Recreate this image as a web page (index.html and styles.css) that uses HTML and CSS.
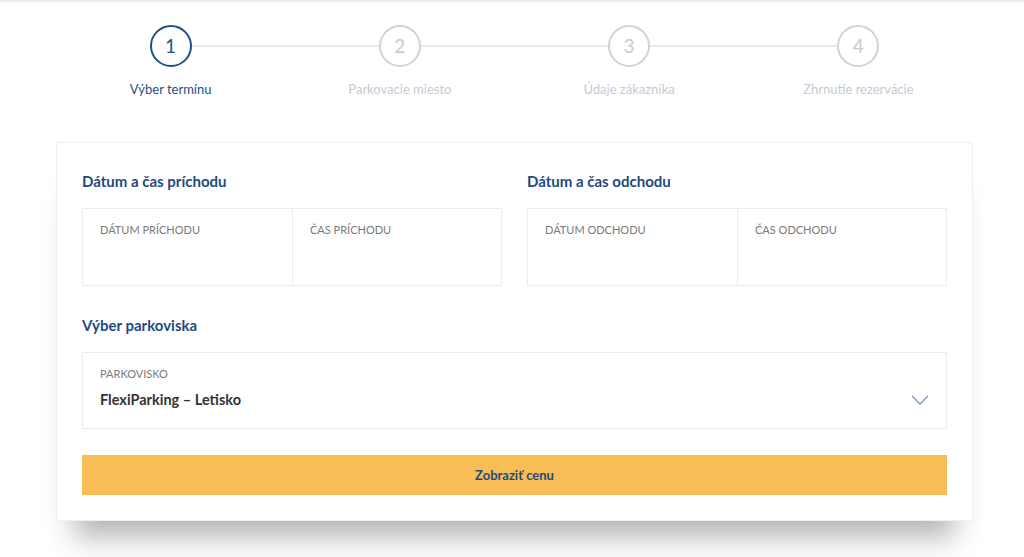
FILE: index.html
```html
<!DOCTYPE html>
<html lang="sk">
<head>
    <meta charset="UTF-8">
    <meta name="viewport" content="width=device-width, initial-scale=1.0">
    <title>Rezervácia parkovania</title>
    <link rel="stylesheet" href="styles.css">
</head>
<body>

<div class="page">
    <!-- Kroky rezervácie -->
    <ol class="steps">
        <li class="step active">
            <span class="step-num">1</span>
            <span class="step-label">Výber termínu</span>
        </li>
        <li class="step">
            <span class="step-num">2</span>
            <span class="step-label">Parkovacie miesto</span>
        </li>
        <li class="step">
            <span class="step-num">3</span>
            <span class="step-label">Údaje zákazníka</span>
        </li>
        <li class="step">
            <span class="step-num">4</span>
            <span class="step-label">Zhrnutie rezervácie</span>
        </li>
    </ol>

    <form class="card">
        <div class="row">
            <div class="group">
                <h2>Dátum a čas príchodu</h2>
                <div class="field-pair">
                    <div class="field">
                        <label>Dátum príchodu</label>
                    </div>
                    <div class="field">
                        <label>Čas príchodu</label>
                    </div>
                </div>
            </div>
            <div class="group">
                <h2>Dátum a čas odchodu</h2>
                <div class="field-pair">
                    <div class="field">
                        <label>Dátum odchodu</label>
                    </div>
                    <div class="field">
                        <label>Čas odchodu</label>
                    </div>
                </div>
            </div>
        </div>

        <h2 class="section-title">Výber parkoviska</h2>
        <div class="select">
            <div>
                <label>Parkovisko</label>
                <div class="select-value">FlexiParking – Letisko</div>
            </div>
            <svg class="chevron" width="18" height="10" viewBox="0 0 18 10">
                <polyline points="1,1 9,9 17,1" fill="none" stroke="#7d97b8" stroke-width="1.3"/>
            </svg>
        </div>

        <button type="button" class="btn">Zobraziť cenu</button>
    </form>
</div>

</body>
</html>
```

FILE: styles.css
```css
body {
    margin: 0;
    font-family: Lato, "Open Sans", Arial, sans-serif;
    background: #fff;
    border-top: 2px solid #ebebeb;
    color: #333;
}
.page {
    width: 917px;
    margin: 0 50px 0 56px;
    padding-bottom: 40px;
}
.steps {
    list-style: none;
    margin: 0;
    padding: 23px 0 0;
    display: grid;
    grid-template-columns: repeat(4, 1fr);
}
.step {
    position: relative;
    display: flex;
    flex-direction: column;
    align-items: center;
}
.step:not(:last-child)::before {
    content: "";
    position: absolute;
    top: 20px;
    left: 50%;
    width: 100%;
    height: 2px;
    background: #e6eaef;
}
.step-num {
    position: relative;
    width: 38px;
    height: 38px;
    border: 2px solid #ccd3dd;
    border-radius: 50%;
    background: #fff;
    color: #c3cbd6;
    font-size: 19px;
    line-height: 38px;
    text-align: center;
}
.step-label {
    margin-top: 14px;
    font-size: 13px;
    color: #c3cbd6;
}
.step.active .step-num {
    border-color: #1f4f8a;
    color: #1f4f8a;
}
.step.active .step-label {
    color: #1f4f8a;
}

.card {
    margin-top: 45px;
    padding: 28px 25px 25px 25px;
    border: 1px solid #efefef;
    background: #fff;
    box-shadow: 0 34px 28px -18px rgba(0, 0, 0, 0.3);
}
.row {
    display: grid;
    grid-template-columns: 1fr 1fr;
    gap: 25px;
}
h2 {
    margin: 0 0 17px;
    font-size: 15px;
    line-height: 20px;
    font-weight: 700;
    color: #1f4a7e;
}
.section-title {
    margin-top: 29px;
}
.field-pair {
    display: grid;
    grid-template-columns: 1fr 1fr;
    border: 1px solid #ececec;
    height: 76px;
}
.field {
    padding: 14px 17px;
}
.field + .field {
    border-left: 1px solid #ececec;
}
label {
    display: block;
    font-size: 11px;
    line-height: 14px;
    text-transform: uppercase;
    color: #7a7a7a;
}
.select {
    display: flex;
    align-items: flex-start;
    justify-content: space-between;
    height: 61px;
    padding: 14px 17px 0;
    border: 1px solid #ececec;
}
.select-value {
    margin-top: 9px;
    font-size: 14.5px;
    line-height: 20px;
    font-weight: 700;
    color: #333;
}
.chevron {
    margin-top: 28px;
}
.btn {
    display: block;
    width: 100%;
    height: 40px;
    margin-top: 26px;
    border: none;
    background: #f8bd57;
    color: #1f4a7e;
    font-family: inherit;
    font-size: 13px;
    font-weight: 700;
    cursor: pointer;
}
```
